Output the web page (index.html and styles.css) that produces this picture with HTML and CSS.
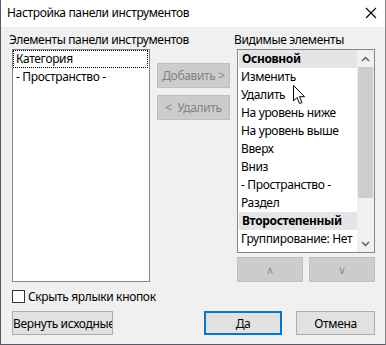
FILE: index.html
```html
<!DOCTYPE html>
<html lang="ru">
<head>
<meta charset="utf-8">
<title>Настройка панели инструментов</title>
<link rel="stylesheet" href="styles.css">
</head>
<body>
<div class="window">
  <div class="titlebar">
    <span class="title">Настройка панели инструментов</span>
    <svg class="close" width="12" height="12" viewBox="0 0 12 12"><path d="M1 1 L11 11 M11 1 L1 11" stroke="#000" stroke-width="1.1" fill="none"/></svg>
  </div>
  <div class="body">
    <div class="columns">
      <div class="col col-left">
        <div class="label">Элементы панели инструментов</div>
        <div class="listbox list-left">
          <div class="row focus">Категория</div>
          <div class="row">- Пространство -</div>
        </div>
      </div>
      <div class="col col-mid">
        <div class="btn disabled">Добавить &gt;</div>
        <div class="btn disabled">&lt;&nbsp; Удалить</div>
      </div>
      <div class="col col-right">
        <div class="label">Видимые элементы</div>
        <div class="listbox list-right">
          <div class="rows">
            <div class="row sel bold">Основной</div>
            <div class="row">Изменить</div>
            <div class="row">Удалить</div>
            <div class="row">На уровень ниже</div>
            <div class="row">На уровень выше</div>
            <div class="row">Вверх</div>
            <div class="row">Вниз</div>
            <div class="row">- Пространство -</div>
            <div class="row">Раздел</div>
            <div class="row sel bold">Второстепенный</div>
            <div class="row">Группирование: Нет</div>
          </div>
          <div class="scrollbar">
            <div class="arrow"><svg width="9" height="6" viewBox="0 0 9 6"><path d="M1 5 L4.5 1.5 L8 5" stroke="#606060" stroke-width="1.5" fill="none"/></svg></div>
            <div class="track"><div class="thumb"></div></div>
            <div class="arrow"><svg width="9" height="6" viewBox="0 0 9 6"><path d="M1 1 L4.5 4.5 L8 1" stroke="#606060" stroke-width="1.5" fill="none"/></svg></div>
          </div>
        </div>
        <div class="updown">
          <div class="btn disabled small">∧</div>
          <div class="btn disabled small">∨</div>
        </div>
      </div>
    </div>
    <label class="check-row">
      <span class="checkbox"></span>
      <span>Скрыть ярлыки кнопок</span>
    </label>
    <div class="footer">
      <div class="btn reset">Вернуть исходные</div>
      <div class="spacer"></div>
      <div class="btn default">Да</div>
      <div class="btn cancel">Отмена</div>
    </div>
  </div>
  <svg class="cursor" width="13" height="20" viewBox="0 0 13 20"><path d="M0.5 0.5 L0.5 16 L4 12.5 L6.5 18.5 L9 17.5 L6.5 11.7 L11.5 11.7 Z" fill="#fff" stroke="#000" stroke-width="1" stroke-linejoin="miter"/></svg>
</div>
</body>
</html>
```

FILE: styles.css
```css
* { box-sizing: border-box; }
html, body { margin: 0; padding: 0; background: #f0f0f0; }
body {
  font-family: "Noto Sans", "Liberation Sans", sans-serif;
  font-size: 12px;
  letter-spacing: -0.35px;
  color: #000;
}
.window {
  position: relative;
  width: 386px;
  height: 345px;
  background: #f0f0f0;
  border-left: 1px solid #5e5866;
  border-right: 1px solid #858585;
  border-bottom: 1px solid #5e5866;
  display: flex;
  flex-direction: column;
}
.titlebar {
  height: 27px;
  background: #fff;
  display: flex;
  align-items: center;
  justify-content: space-between;
  padding: 0 8px 1px 6px;
  flex: none;
}
.title { line-height: 16px; }
.body {
  padding: 6px 10px 0 11px;
  display: flex;
  flex-direction: column;
}
.columns {
  display: flex;
  gap: 7px;
  height: 249px;
}
.col { display: flex; flex-direction: column; }
.col-left, .col-right { width: 138px; }
.col-mid { width: 73px; padding-top: 30px; gap: 7px; }
.label {
  height: 16px;
  line-height: 14px;
  white-space: nowrap;
  margin-left: -3px;
}
.listbox {
  background: #fff;
  border: 1px solid #828790;
}
.list-left { height: 233px; }
.list-right {
  height: 204px;
  display: flex;
}
.rows { width: 119px; overflow: hidden; }
.row {
  height: 18px;
  line-height: 17px;
  padding-left: 3px;
  white-space: nowrap;
}
.row.focus {
  border: 1px dotted #000;
  line-height: 15px;
  padding-left: 2px;
  margin-right: 1px;
}
.row.sel { background: #e5e5e5; margin-left: 1px; padding-left: 3px; }
.bold { font-weight: bold; }
.scrollbar {
  width: 17px;
  display: flex;
  flex-direction: column;
  background: #f0f0f0;
}
.arrow {
  height: 17px;
  display: flex;
  align-items: center;
  justify-content: center;
  flex: none;
}
.track { flex: 1; display: flex; flex-direction: column; padding: 0 1px; }
.thumb { height: 131px; background: #cdcdcd; }
.btn {
  display: flex;
  align-items: center;
  justify-content: center;
  white-space: nowrap;
  background: #e1e1e1;
  border: 1px solid #adadad;
  height: 24px;
  overflow: hidden;
}
.btn.disabled {
  background: #cccccc;
  border-color: #bfbfbf;
  color: #838383;
  height: 25px;
}
.updown {
  display: flex;
  gap: 6px;
  margin-top: 4px;
}
.btn.small { width: 66px; font-size: 11px; color: #8d8d8d; }
.check-row {
  display: flex;
  align-items: center;
  gap: 3px;
  height: 13px;
  margin-top: 8px;
  line-height: 13px;
}
.checkbox {
  width: 13px;
  height: 13px;
  background: #fff;
  border: 1px solid #333;
  flex: none;
}
.footer {
  display: flex;
  margin-top: 8px;
  gap: 14px;
}
.spacer { flex: 1; }
.btn.reset {
  width: 101px;
  justify-content: flex-start;
  padding-left: 0;
}
.btn.default {
  width: 78px;
  border: 2px solid #0078d7;
}
.btn.cancel { width: 79px; }
.cursor {
  position: absolute;
  left: 292px;
  top: 85px;
}
```
